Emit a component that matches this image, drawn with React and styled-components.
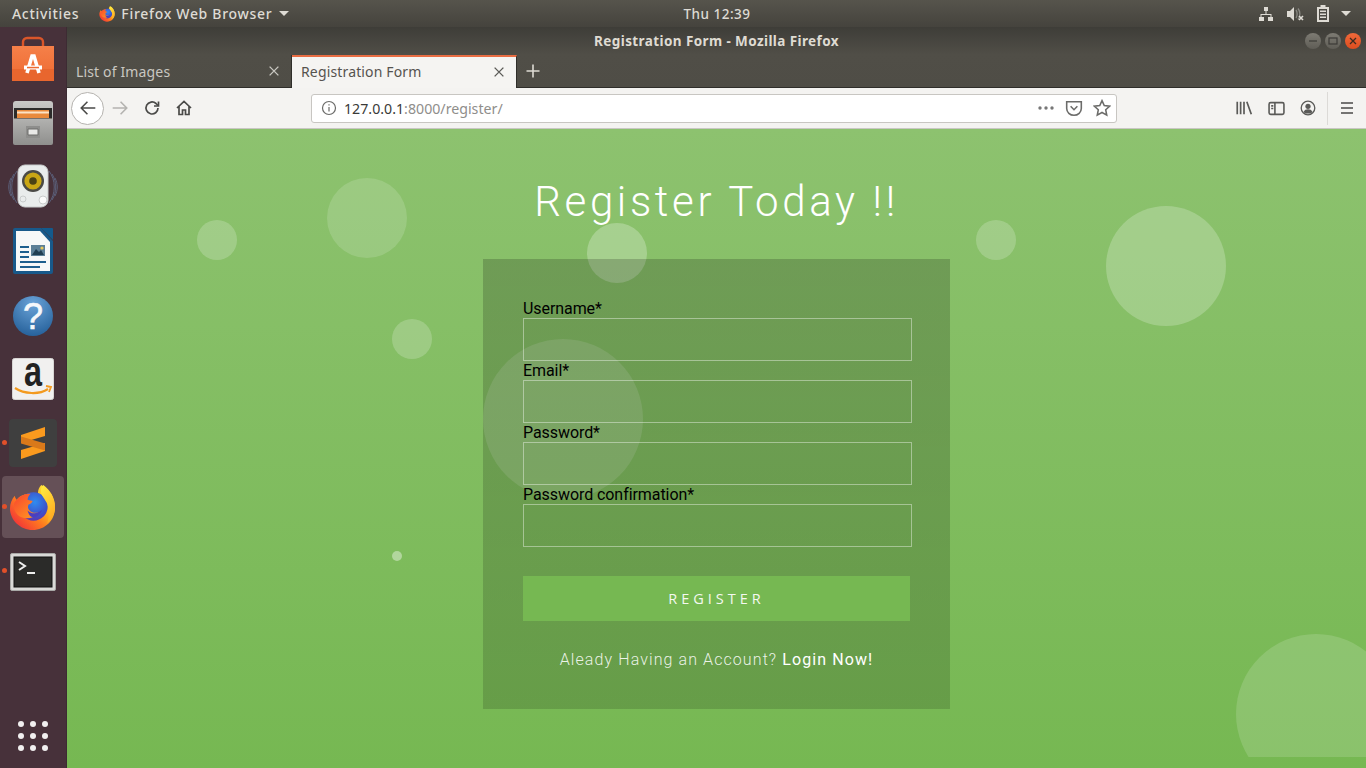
import styled, { createGlobalStyle } from "styled-components";

const GlobalStyle = createGlobalStyle`
    html, body {
        margin: 0;
        padding: 0;
        height: 100%;
        overflow: hidden;
    }
    * {
        box-sizing: border-box;
    }
`;

const uiFont = `"Noto Sans", "Open Sans", sans-serif`;

const Desktop = styled.div`
    width: 1366px;
    height: 768px;
    display: flex;
    flex-direction: column;
    overflow: hidden;
    font-family: ${uiFont};
`;

const TopBar = styled.header`
    height: 27px;
    flex: none;
    display: grid;
    grid-template-columns: 1fr auto 1fr;
    align-items: center;
    padding: 0 12px;
    background: linear-gradient(#56544c, #45433d);
    color: #dedbd4;
    font-size: 14px;
    font-weight: 500;
    letter-spacing: 0.7px;
`;

const TopLeft = styled.div`
    display: flex;
    align-items: center;
`;

const AppMenu = styled.div`
    display: flex;
    align-items: center;
    margin-left: 20px;
    gap: 6px;
`;

const Clock = styled.div`
    margin-left: 68px;
    font-size: 13.5px;
    letter-spacing: 0.5px;
`;

const TopRight = styled.div`
    display: flex;
    align-items: center;
    justify-content: flex-end;
    gap: 12px;
    padding-right: 3px;
`;

const Caret = styled.span`
    width: 0;
    height: 0;
    border-left: 5px solid transparent;
    border-right: 5px solid transparent;
    border-top: 5px solid #dedbd4;
    margin-left: ${(p) => p.$gap || 0}px;
`;

const Body = styled.div`
    flex: 1;
    min-height: 0;
    display: flex;
`;

const Dock = styled.nav`
    width: 67px;
    flex: none;
    display: flex;
    flex-direction: column;
    background: #47313a;
    border-right: 1px solid #3d2b33;
`;

const DockItem = styled.div`
    position: relative;
    height: 64px;
    flex: none;
    display: flex;
    align-items: center;
    justify-content: center;
`;

const SublimeTile = styled.div`
    width: 48px;
    height: 48px;
    display: flex;
    align-items: center;
    justify-content: center;
    border-radius: 4px;
    background: #3f3f3f;
`;

const ActiveTile = styled.div`
    width: 62px;
    height: 62px;
    margin-left: -1px;
    display: flex;
    align-items: center;
    justify-content: center;
    border-radius: 4px;
    background: #655057;
`;

const RunDot = styled.span`
    position: absolute;
    left: 2px;
    top: 29px;
    width: 5px;
    height: 5px;
    border-radius: 50%;
    background: #e2502a;
`;

const AppGrid = styled.div`
    margin-top: auto;
    margin-bottom: 17px;
    align-self: center;
    display: grid;
    grid-template-columns: repeat(3, 6px);
    gap: 6px;
`;

const AppDot = styled.span`
    width: 6px;
    height: 6px;
    border-radius: 50%;
    background: #f1efef;
`;

const Browser = styled.main`
    flex: 1;
    min-width: 0;
    display: flex;
    flex-direction: column;
`;

const Chrome = styled.div`
    flex: none;
    background: linear-gradient(#3e3d38, #504e47 45%, #4f4d46);
`;

const TitleBar = styled.div`
    height: 28px;
    display: grid;
    grid-template-columns: 1fr auto 1fr;
    align-items: center;
    padding: 0 5px;
    color: #dfdbd2;
    font-size: 13.5px;
    font-weight: 700;
    letter-spacing: 0.4px;
`;

const WindowButtons = styled.div`
    grid-column: 3;
    display: flex;
    justify-content: flex-end;
    gap: 4px;
`;

const WindowButton = styled.span`
    width: 16px;
    height: 16px;
    border-radius: 50%;
    display: flex;
    align-items: center;
    justify-content: center;
    background: ${(p) =>
        p.$close
            ? "linear-gradient(#f0693a, #dd4d1f)"
            : "linear-gradient(#7d7b73, #5f5d56)"};
`;

const TabStrip = styled.div`
    height: 33px;
    display: flex;
    align-items: stretch;
    border-bottom: 1px solid #2f2e2a;
`;

const Tab = styled.div`
    width: 225px;
    height: ${(p) => (p.$active ? 33 : 32)}px;
    display: flex;
    align-items: center;
    justify-content: space-between;
    padding: ${(p) => (p.$active ? "0 10px 2px 9px" : "0 10px 0 9px")};
    font-size: 14px;
    letter-spacing: 0.15px;
    color: ${(p) => (p.$active ? "#55534f" : "#c9c7c1")};
    background: ${(p) => (p.$active ? "#f5f4f2" : "transparent")};
    border-top: ${(p) => (p.$active ? "2px solid #e96d43" : "0")};
    border-right: 1px solid #2f2e2a;
    ${(p) => p.$active && "z-index: 1;"}
`;

const NewTab = styled.div`
    width: 32px;
    display: flex;
    align-items: center;
    justify-content: center;
`;

const NavBar = styled.div`
    height: 41px;
    flex: none;
    display: flex;
    align-items: center;
    padding: 0 11px 0 4px;
    background: #f4f3f1;
    border-bottom: 1px solid #c9c7c3;
`;

const BackButton = styled.div`
    width: 33px;
    height: 33px;
    flex: none;
    display: flex;
    align-items: center;
    justify-content: center;
    border-radius: 50%;
    background: #fff;
    border: 1px solid #b5b3af;
`;

const NavIcon = styled.div`
    width: 32px;
    height: 32px;
    flex: none;
    display: flex;
    align-items: center;
    justify-content: center;
`;

const NavGroup = styled.div`
    display: flex;
    align-items: center;
    margin-left: ${(p) => p.$gap || 0}px;
`;

const UrlBar = styled.div`
    width: 806px;
    height: 29px;
    flex: none;
    margin-left: 111px;
    display: flex;
    align-items: center;
    padding: 0 5px 0 9px;
    background: #fff;
    border: 1px solid #c8c6c2;
    border-radius: 3px;
    font-size: 14.2px;
`;

const UrlHost = styled.span`
    color: #3a3a38;
    margin-left: 7px;
`;

const UrlPath = styled.span`
    color: #8f8e8b;
`;

const UrlActions = styled.div`
    margin-left: auto;
    display: flex;
    align-items: center;
    gap: 10px;
`;

const Separator = styled.div`
    width: 1px;
    height: 33px;
    margin: 0 3px 0 3px;
    background: #dcdad7;
`;

const Page = styled.section`
    position: relative;
    flex: 1;
    min-height: 0;
    overflow: hidden;
    display: flex;
    flex-direction: column;
    align-items: center;
    background: linear-gradient(to top, #76b852, #8dc26f);
    font-family: Roboto, sans-serif;
`;

const Bubbles = styled.div`
    position: absolute;
    left: 0;
    right: 0;
    top: 0;
    height: 628px;
    overflow: hidden;
`;

const Bubble = styled.span`
    position: absolute;
    left: ${(p) => p.$x}px;
    top: ${(p) => p.$y}px;
    width: ${(p) => p.$size}px;
    height: ${(p) => p.$size}px;
    border-radius: 50%;
    background: rgba(255, 255, 255, ${(p) => p.$alpha});
`;

const Heading = styled.h1`
    position: relative;
    height: 130px;
    margin: 0;
    padding-top: 46px;
    font-size: 42px;
    line-height: 54px;
    font-weight: 300;
    letter-spacing: 3.65px;
    color: #fff;
`;

const Card = styled.form`
    position: relative;
    width: 467px;
    padding: 40px;
    background: linear-gradient(rgba(0, 0, 0, 0.19), rgba(0, 0, 0, 0.15));
`;

const Label = styled.label`
    display: block;
    height: 19px;
    font-size: 16px;
    line-height: 19px;
    letter-spacing: -0.07px;
    color: #000;
`;

const Input = styled.input`
    display: block;
    width: calc(100% + 2px);
    height: 43px;
    background: transparent;
    border: 1px solid rgba(255, 255, 255, 0.4);
    outline: none;
`;

const SubmitButton = styled.button`
    display: block;
    width: 100%;
    height: 45px;
    margin-top: 29px;
    border: 0;
    background: #76b852;
    color: #f4f8f0;
    font-family: "Open Sans", sans-serif;
    font-size: 14.5px;
    letter-spacing: 4px;
`;

const Footer = styled.p`
    margin: 29px 0 0;
    font-size: 16px;
    line-height: 19px;
    font-weight: 300;
    letter-spacing: 1.09px;
    text-align: center;
    color: rgba(255, 255, 255, 0.88);
`;

const LoginLink = styled.a`
    font-weight: 400;
    color: #fff;
`;

function FirefoxLogo({ size, id }) {
    return (
        <svg width={size} height={size} viewBox="0 0 48 48">
            <defs>
                <linearGradient id={`${id}-flame`} x1="0.9" y1="0.1" x2="0.1" y2="0.9">
                    <stop offset="0" stopColor="#ffe53b" />
                    <stop offset="0.35" stopColor="#ffb51f" />
                    <stop offset="0.6" stopColor="#ff7a1f" />
                    <stop offset="1" stopColor="#f0303a" />
                </linearGradient>
                <radialGradient id={`${id}-globe`} cx="0.55" cy="0.35" r="0.75">
                    <stop offset="0" stopColor="#2f8cf0" />
                    <stop offset="0.6" stopColor="#3e51c9" />
                    <stop offset="1" stopColor="#6a2aa8" />
                </radialGradient>
                <linearGradient id={`${id}-tail`} x1="0" y1="0" x2="1" y2="1">
                    <stop offset="0" stopColor="#f9432f" />
                    <stop offset="1" stopColor="#ffa020" />
                </linearGradient>
                <linearGradient id={`${id}-crest`} x1="0.3" y1="0" x2="0.7" y2="1">
                    <stop offset="0" stopColor="#ffe83f" />
                    <stop offset="1" stopColor="#ffa51f" />
                </linearGradient>
            </defs>
            <path
                d="M33 1c8 4 14 13 14 23 0 13-10 23-23 23C12 47 1 37 1 25c0-5 2-10 5-13 0 2 1 3 2 4 3-4 9-6 14-6 3 0 6 1 8 2-1-4 0-8 3-11z"
                fill={`url(#${id}-flame)`}
            />
            <circle cx="25" cy="23" r="14.5" fill={`url(#${id}-globe)`} />
            <path
                d="M35 1c-3 3-3 8-1 11 3 5 6 8 6 13 1 5 1 10-1 15 5-4 8-10 8-17 0-9-5-17-12-22z"
                fill={`url(#${id}-crest)`}
            />
            <path
                d="M8 16c3-4 8-6 14-6-2 2-3 4-3 6 2 1 4 1 5 1 0 2-2 3-4 4-1 2-1 4 1 6 2 2 5 3 9 2-3 4-7 6-12 6-7 0-13-5-13-13 0-3 1-4 3-6z"
                fill={`url(#${id}-tail)`}
            />
            <path d="M19 27c4 4 10 4 15-1-2 5-6 8-9 8s-5-3-6-7z" fill="#4a3fc0" />
        </svg>
    );
}

function BagIcon() {
    return (
        <svg width="44" height="46" viewBox="0 0 44 46">
            <defs>
                <linearGradient id="bag" x1="0" y1="0" x2="0" y2="1">
                    <stop offset="0" stopColor="#f58049" />
                    <stop offset="1" stopColor="#ee6a31" />
                </linearGradient>
            </defs>
            <path
                d="M12 12V6a4 4 0 0 1 4-4h12a4 4 0 0 1 4 4v6"
                fill="none"
                stroke="#d9562a"
                strokeWidth="2.4"
            />
            <path d="M1 10h42v35H1z" fill="url(#bag)" />
            <path d="M1 33h42v12H1z" fill="#e8662e" />
            <path
                d="M16 37l5-17h2l5 17"
                fill="none"
                stroke="#fff"
                strokeWidth="3.6"
            />
            <path d="M13 29.500h18v4H13z" fill="#fff" />
            <path d="M16 30.800h12v1.500H16z" fill="#ee6a31" />
        </svg>
    );
}

function CabinetIcon() {
    return (
        <svg width="44" height="46" viewBox="0 0 44 46">
            <defs>
                <linearGradient id="cab" x1="0" y1="0" x2="0" y2="1">
                    <stop offset="0" stopColor="#c9c9c7" />
                    <stop offset="1" stopColor="#8f8f8d" />
                </linearGradient>
            </defs>
            <path d="M2 4a3 3 0 0 1 3-3h34a3 3 0 0 1 3 3v39a2 2 0 0 1-2 2H4a2 2 0 0 1-2-2z" fill="url(#cab)" />
            <path d="M3 8h38v10H3z" fill="#2c2b2a" />
            <path d="M6 10h32v8H6z" fill="#e98a3c" />
            <path d="M6 11.500h32v2H6z" fill="#fbe3c6" />
            <path d="M3 18h38v1H3z" fill="#77706a" />
            <path d="M15 26h14v12H15z" fill="#8e8e8c" />
            <path d="M17 29h10v6H17z" fill="#e9e9e7" stroke="#6d6d6b" />
        </svg>
    );
}

function SpeakerIcon() {
    return (
        <svg width="50" height="48" viewBox="0 0 50 48">
            <g fill="none" stroke="#6c86ad" strokeWidth="1" opacity="0.55">
                <path d="M9 8c-7 9-7 23 0 32" />
                <path d="M6 11c-5 8-5 18 0 26" />
                <path d="M3 15c-3 6-3 12 0 18" />
                <path d="M41 8c7 9 7 23 0 32" />
                <path d="M44 11c5 8 5 18 0 26" />
                <path d="M47 15c3 6 3 12 0 18" />
            </g>
            <rect x="10" y="2" width="30" height="42" rx="7" fill="#e9ecec" />
            <rect x="10" y="2" width="30" height="42" rx="7" fill="none" stroke="#c8cccc" />
            <circle cx="25" cy="18" r="11" fill="#4a4a46" />
            <circle cx="25" cy="18" r="8.600" fill="#c9a614" />
            <circle cx="25" cy="18" r="3.800" fill="#4a4214" />
            <circle cx="35" cy="37" r="4" fill="#fbfbfb" stroke="#c9cccc" />
            <circle cx="15" cy="36" r="3" fill="none" stroke="#c9cccc" />
        </svg>
    );
}

function WriterIcon() {
    return (
        <svg width="42" height="48" viewBox="0 0 42 48">
            <path d="M1 3a2 2 0 0 1 2-2h26l12 13v31a2 2 0 0 1-2 2H3a2 2 0 0 1-2-2z" fill="#18598a" />
            <path d="M29 1h11a1 1 0 0 1 1 1v11z" fill="#135a8c" />
            <path d="M4 4h24l10 11v29H4z" fill="#f6f8f8" />
            <path d="M8 19h9v2H8zM8 24h9v2H8zM8 29h9v2H8zM8 34h26v2H8zM8 39h20v2H8z" fill="#1d5f8e" />
            <path d="M19 18h14v11H19z" fill="#5b7f96" />
            <path d="M20 28l4-6 3 3 2-2 3 5z" fill="#1f3e52" />
            <circle cx="30" cy="21" r="1.600" fill="#e8c85a" />
        </svg>
    );
}

const HelpText = styled.text`
    font-family: "Liberation Sans", sans-serif;
    font-size: 36px;
    fill: #f5f8fb;
    stroke: #f5f8fb;
    stroke-width: 0.6px;
`;

function HelpIcon() {
    return (
        <svg width="42" height="44" viewBox="0 0 42 44" overflow="visible">
            <defs>
                <radialGradient id="help" cx="0.5" cy="0.2" r="0.9">
                    <stop offset="0" stopColor="#6aa3d8" />
                    <stop offset="1" stopColor="#1f5a94" />
                </radialGradient>
            </defs>
            <circle cx="21" cy="23" r="20" fill="url(#help)" />
            <HelpText x="21" y="36" textAnchor="middle">?</HelpText>
        </svg>
    );
}

const AmazonText = styled.text`
    font-family: "Liberation Sans", sans-serif;
    font-weight: 700;
    font-size: 42px;
    fill: #222;
`;

function AmazonIcon() {
    return (
        <svg width="42" height="42" viewBox="0 0 42 42" overflow="visible">
            <rect x="0.5" y="0.5" width="41" height="41" rx="2" fill="#f1f0ef" stroke="#d8d6d4" />
            <AmazonText x="12" y="28" textLength="18" lengthAdjust="spacingAndGlyphs">a</AmazonText>
            <path d="M3 30c9 6 24 7 33 1" fill="none" stroke="#f39a1f" strokeWidth="2.2" />
            <path d="M34 28l5 1-2 5" fill="none" stroke="#f39a1f" strokeWidth="1.800" />
        </svg>
    );
}

function SublimeIcon() {
    return (
        <svg width="26" height="32" viewBox="0 0 26 32">
            <path d="M25 0v9L1 16V8z" fill="#fa9a1e" />
            <path d="M1 23v9l24-8v-8z" fill="#fa9a1e" />
            <path d="M1 9.500v7l24 7v-7z" fill="#d9791a" />
        </svg>
    );
}

function TerminalIcon() {
    return (
        <svg width="46" height="40" viewBox="0 0 46 40">
            <g transform="translate(0 2)">
                <rect x="0.500" y="0.500" width="45" height="37" rx="1.500" fill="#d9d9d7" stroke="#a9a9a7" />
                <rect x="4" y="4" width="38" height="30" fill="#2b2b29" stroke="#111" />
                <path d="M9 9l6 4-6 4" fill="none" stroke="#eee" strokeWidth="2" />
                <path d="M17 19h8v2h-8z" fill="#eee" />
            </g>
        </svg>
    );
}

function Glyph({ size = 16, color = "#4a4a48", width = 1.7, children }) {
    return (
        <svg
            width={size}
            height={size}
            viewBox="0 0 16 16"
            fill="none"
            stroke={color}
            strokeWidth={width}
        >
            {children}
        </svg>
    );
}

const dockApps = [
    { key: "bag", icon: <BagIcon /> },
    { key: "files", icon: <CabinetIcon /> },
    { key: "speaker", icon: <SpeakerIcon /> },
    { key: "writer", icon: <WriterIcon /> },
    { key: "help", icon: <HelpIcon /> },
    { key: "amazon", icon: <AmazonIcon /> },
];

const bubbleData = [
    { x: 260, y: 49, size: 80, alpha: 0.15 },
    { x: 130, y: 91, size: 40, alpha: 0.2 },
    { x: 520, y: 94, size: 60, alpha: 0.25 },
    { x: 909, y: 91, size: 40, alpha: 0.2 },
    { x: 1039, y: 77, size: 120, alpha: 0.22 },
    { x: 325, y: 190, size: 40, alpha: 0.2 },
    { x: 416, y: 210, size: 160, alpha: 0.15 },
    { x: 325, y: 422, size: 10, alpha: 0.4 },
    { x: 1169, y: 505, size: 160, alpha: 0.15 },
];

const fields = ["Username*", "Email*", "Password*", "Password confirmation*"];

export default function App() {
    return (
        <Desktop>
            <GlobalStyle />
            <TopBar>
                <TopLeft>
                    <span>Activities</span>
                    <AppMenu>
                        <FirefoxLogo size={16} id="ff-top" />
                        <span>Firefox Web Browser</span>
                        <Caret $gap={1} />
                    </AppMenu>
                </TopLeft>
                <Clock>Thu 12:39</Clock>
                <TopRight>
                    <svg width="16" height="16" viewBox="0 0 16 16" fill="#dedbd4">
                        <path d="M6 1h4v4H6zM1 11h5v4H1zM10 11h5v4h-5z" />
                        <path d="M7.500 5h1v3h5v3h-1V9h-9v2h-1V8h5z" />
                    </svg>
                    <svg width="18" height="16" viewBox="0 0 18 16">
                        <path d="M1 5h3l4-4v14l-4-4H1z" fill="#dedbd4" />
                        <path d="M10 4c1.500 2 1.500 6 0 8M12 2.500c2.500 3 2.500 8 0 11" fill="none" stroke="#8b8a84" strokeWidth="1.300" />
                        <path d="M13 10l4 4M17 10l-4 4" stroke="#dedbd4" strokeWidth="1.600" />
                    </svg>
                    <svg width="14" height="17" viewBox="0 0 14 17">
                        <path d="M4.500 0h5v2H13v15H1V2h3.500z" fill="#dedbd4" />
                        <path d="M3 4h8v11H3z" fill="#4d4b45" />
                        <path d="M4 5.500h6v1.500H4zM4 8.500h6V10H4zM4 11.500h6V13H4z" fill="#dedbd4" />
                    </svg>
                    <Caret $gap={-1} />
                </TopRight>
            </TopBar>
            <Body>
                <Dock>
                    {dockApps.map((app) => (
                        <DockItem key={app.key}>{app.icon}</DockItem>
                    ))}
                    <DockItem>
                        <RunDot />
                        <SublimeTile>
                            <SublimeIcon />
                        </SublimeTile>
                    </DockItem>
                    <DockItem>
                        <RunDot />
                        <ActiveTile>
                            <FirefoxLogo size={47} id="ff-dock" />
                        </ActiveTile>
                    </DockItem>
                    <DockItem>
                        <RunDot />
                        <TerminalIcon />
                    </DockItem>
                    <AppGrid>
                        {Array.from({ length: 9 }, (_, i) => (
                            <AppDot key={i} />
                        ))}
                    </AppGrid>
                </Dock>
                <Browser>
                    <Chrome>
                        <TitleBar>
                            <span />
                            <span>Registration Form - Mozilla Firefox</span>
                            <WindowButtons>
                                <WindowButton>
                                    <svg width="10" height="10" viewBox="0 0 10 10">
                                        <path d="M1 5h8" stroke="#3c3b37" strokeWidth="1.200" />
                                    </svg>
                                </WindowButton>
                                <WindowButton>
                                    <svg width="10" height="10" viewBox="0 0 10 10">
                                        <rect x="1" y="2" width="8" height="6" fill="none" stroke="#3c3b37" strokeWidth="1.200" />
                                    </svg>
                                </WindowButton>
                                <WindowButton $close>
                                    <svg width="10" height="10" viewBox="0 0 10 10">
                                        <path d="M2 2l6 6M8 2l-6 6" stroke="#3c2b20" strokeWidth="1.300" />
                                    </svg>
                                </WindowButton>
                            </WindowButtons>
                        </TitleBar>
                        <TabStrip>
                            <Tab>
                                <span>List of Images</span>
                                <Glyph size={14} color="#c9c7c1" width={1.6}>
                                    <path d="M3 3l10 10M13 3L3 13" />
                                </Glyph>
                            </Tab>
                            <Tab $active>
                                <span>Registration Form</span>
                                <Glyph size={14} color="#5c5b58" width={1.6}>
                                    <path d="M3 3l10 10M13 3L3 13" />
                                </Glyph>
                            </Tab>
                            <NewTab>
                                <Glyph size={16} color="#dedbd4" width={1.6}>
                                    <path d="M8 1.500v13M1.500 8h13" />
                                </Glyph>
                            </NewTab>
                        </TabStrip>
                    </Chrome>
                    <NavBar>
                        <BackButton>
                            <Glyph size={18} color="#4a4a48" width={1.4}>
                                <path d="M14.500 8H2M7.500 2.500L2 8l5.500 5.500" />
                            </Glyph>
                        </BackButton>
                        <NavGroup>
                            <NavIcon>
                                <Glyph size={18} color="#b4b3b0" width={1.4}>
                                    <path d="M1.500 8H14M8.500 2.500L14 8l-5.500 5.500" />
                                </Glyph>
                            </NavIcon>
                            <NavIcon>
                                <Glyph size={16} color="#4a4a48">
                                    <path d="M14 8a6 6 0 1 1-2-4.500L14 5.500" />
                                    <path d="M14.500 1.500v4.500H10" />
                                </Glyph>
                            </NavIcon>
                            <NavIcon>
                                <Glyph size={16} color="#4a4a48">
                                    <path d="M1 8l7-6.500L15 8M3 6.500V14.500h3.500V10h3v4.500H13V6.500" />
                                </Glyph>
                            </NavIcon>
                        </NavGroup>
                        <UrlBar>
                            <Glyph size={16} color="#6a6a68" width={1.2}>
                                <circle cx="8" cy="8" r="6.500" />
                                <path d="M8 7v4.500M8 4.200v1.400" />
                            </Glyph>
                            <UrlHost>127.0.0.1</UrlHost>
                            <UrlPath>:8000/register/</UrlPath>
                            <UrlActions>
                                <svg width="18" height="16" viewBox="0 0 18 16" fill="#777">
                                    <circle cx="3" cy="8" r="1.700" />
                                    <circle cx="9" cy="8" r="1.700" />
                                    <circle cx="15" cy="8" r="1.700" />
                                </svg>
                                <Glyph size={18} color="#6c6c6a" width={1.4}>
                                    <path d="M1.500 2.500h13v6a6.500 6 0 0 1-13 0z" />
                                    <path d="M5 6.500l3 3 3-3" />
                                </Glyph>
                                <Glyph size={18} color="#6c6c6a" width={1.4}>
                                    <path d="M8 1.500l2 4.300 4.700.6-3.400 3.200.9 4.700L8 12l-4.200 2.300.9-4.700L1.300 6.400 6 5.800z" />
                                </Glyph>
                            </UrlActions>
                        </UrlBar>
                        <NavGroup $gap={111}>
                            <NavIcon>
                                <Glyph size={18} color="#5a5a58" width={1.5}>
                                    <path d="M2 2.500v11M5 2.500v11M8 2.500v11M10.500 2.500l4 11" />
                                </Glyph>
                            </NavIcon>
                            <NavIcon>
                                <Glyph size={17} color="#5a5a58" width={1.5}>
                                    <rect x="1" y="2.500" width="14" height="11" rx="1.500" />
                                    <path d="M6.500 2.500v11M3 5.500h2M3 8h2" />
                                </Glyph>
                            </NavIcon>
                            <NavIcon>
                                <svg width="16" height="16" viewBox="0 0 16 16">
                                    <circle cx="8" cy="8" r="6.800" fill="none" stroke="#5a5a58" strokeWidth="1.300" />
                                    <circle cx="8" cy="6.300" r="2.600" fill="#5a5a58" />
                                    <path d="M3.500 12c1-2 2.500-2.700 4.500-2.700s3.500.7 4.500 2.700c-2 2-7 2-9 0z" fill="#5a5a58" />
                                </svg>
                            </NavIcon>
                            <Separator />
                            <NavIcon>
                                <Glyph size={16} color="#4a4a48" width={1.7}>
                                    <path d="M2 3h12M2 8h12M2 13h12" />
                                </Glyph>
                            </NavIcon>
                        </NavGroup>
                    </NavBar>
                    <Page>
                        <Bubbles>
                            {bubbleData.map((b) => (
                                <Bubble key={`${b.x}-${b.y}`} $x={b.x} $y={b.y} $size={b.size} $alpha={b.alpha} />
                            ))}
                        </Bubbles>
                        <Heading>Register Today !!</Heading>
                        <Card>
                            {fields.map((name) => (
                                <div key={name}>
                                    <Label>{name}</Label>
                                    <Input type="text" />
                                </div>
                            ))}
                            <SubmitButton type="button">REGISTER</SubmitButton>
                            <Footer>
                                Aleady Having an Account? <LoginLink>Login Now!</LoginLink>
                            </Footer>
                        </Card>
                    </Page>
                </Browser>
            </Body>
        </Desktop>
    );
}
